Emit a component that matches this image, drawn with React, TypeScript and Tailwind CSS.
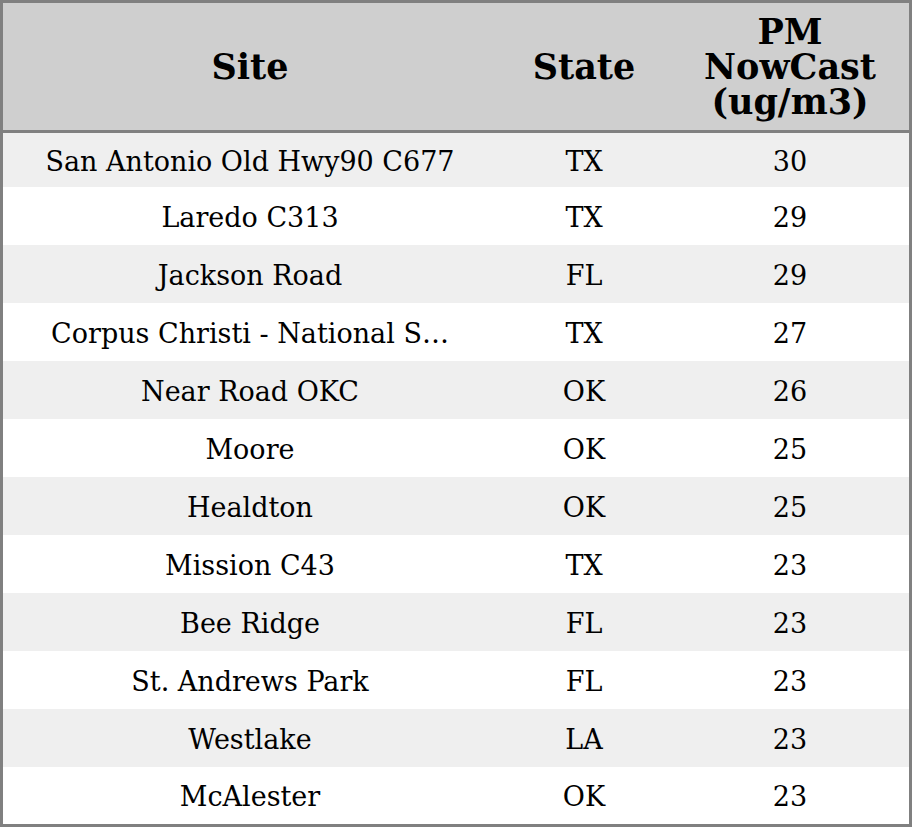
const rows: [string, string, number][] = [
  ['San Antonio Old Hwy90 C677', 'TX', 30],
  ['Laredo C313', 'TX', 29],
  ['Jackson Road', 'FL', 29],
  ['Corpus Christi - National S…', 'TX', 27],
  ['Near Road OKC', 'OK', 26],
  ['Moore', 'OK', 25],
  ['Healdton', 'OK', 25],
  ['Mission C43', 'TX', 23],
  ['Bee Ridge', 'FL', 23],
  ['St. Andrews Park', 'FL', 23],
  ['Westlake', 'LA', 23],
  ['McAlester', 'OK', 23],
]

export default function App() {
  return (
    <div className="h-[827px] w-[912px] overflow-hidden border-[3px] border-[#808080] bg-white font-['DejaVu_Serif',serif] text-black">
      <table className="w-full border-collapse text-center">
        <colgroup>
          <col className="w-[494px]" />
          <col className="w-[174px]" />
          <col />
        </colgroup>
        <thead>
          <tr className="h-[128px] border-b-[3px] border-[#808080] bg-[#cfcfcf] text-[35px] leading-[35px] font-bold">
            <th>Site</th>
            <th>State</th>
            <th>
              PM
              <br />
              NowCast
              <br />
              (ug/m3)
            </th>
          </tr>
        </thead>
        <tbody className="text-[27px]">
          {rows.map(([site, state, value], i) => (
            <tr
              key={site}
              className={
                (i % 2 === 0 ? 'bg-[#efefef] ' : 'bg-white ') +
                (i === 0 ? 'h-[56px]' : i === rows.length - 1 ? 'h-[57px]' : 'h-[58px]')
              }
            >
              <td className="whitespace-nowrap pt-[4px]">{site}</td>
              <td className="pt-[4px]">{state}</td>
              <td className="pt-[4px]">{value}</td>
            </tr>
          ))}
        </tbody>
      </table>
    </div>
  )
}
